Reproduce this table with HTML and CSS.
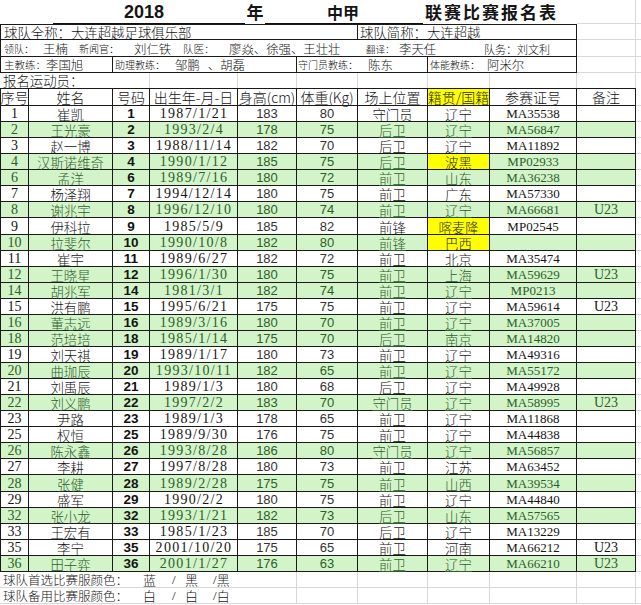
FILE: index.html
```html
<!DOCTYPE html>
<html lang="zh-CN">
<head>
<meta charset="utf-8">
<title>2018年中甲联赛比赛报名表</title>
<link rel="stylesheet" href="styles.css">
</head>
<body>
<div class="sheet">
  <div class="row r-title">
    <div class="title">
      <span class="u1">2018</span>
      <span class="nian">年</span>
      <span class="u2">中甲</span>
      <span class="ttl">联赛比赛报名表</span>
    </div>
    <div class="f"></div><div class="fx"></div>
  </div>

  <div class="row r-a">
    <div class="b bl a1"><span class="lbl13">球队全称：</span><span class="lbl13 ul">大连超越足球俱乐部</span></div>
    <div class="b a2"><span class="lbl13">球队简称：</span><span class="lbl13 ul">大连超越</span></div>
    <div class="f"></div><div class="fx"></div>
  </div>

  <div class="row r-b">
    <div class="b bl bspan">
      <span class="s w1 sm10">领队：</span>
      <span class="s w2 nm12">王楠</span>
      <span class="s w3 sm10">新闻官：</span>
      <span class="s w4 nm12">刘仁铁</span>
      <span class="s w5 sm105">队医：</span>
      <span class="s w6 nm12">廖焱、徐强、王壮壮</span>
      <span class="s w7 sm95">翻译：</span>
      <span class="s w8 nm12">李天任</span>
      <span class="s sm11">队务：刘文利</span>
    </div>
    <div class="f"></div><div class="fx"></div>
  </div>

  <div class="row r-c">
    <div class="b bl c1"><span class="sm105">主教练：</span><span class="nm12">李国旭</span></div>
    <div class="b c2"><span class="sm10">助理教练：</span><span class="nm12 m10">邹鹏</span><span class="nm12 m8">、胡磊</span></div>
    <div class="b c3"><span class="sm10">守门员教练：</span><span class="nm12 m10">陈东</span></div>
    <div class="b c4"><span class="sm10">体能教练：</span><span class="nm12 m7">阿米尔</span></div>
    <div class="f"></div><div class="fx"></div>
  </div>

  <div class="row r-d">
    <div class="d1">报名运动员：</div>
    <div class="fv"></div><div class="fv"></div><div class="fv"></div><div class="fv"></div><div class="fv"></div><div class="fv"></div><div class="fv"></div><div class="fv"></div>
    <div></div>
  </div>

  <div class="row head">
    <div class="c first">序号</div>
    <div class="c">姓名</div>
    <div class="c">号码</div>
    <div class="c">出生年-月-日</div>
    <div class="c">身高(cm)</div>
    <div class="c">体重(Kg)</div>
    <div class="c">场上位置</div>
    <div class="c yel">籍贯/国籍</div>
    <div class="c">参赛证号</div>
    <div class="c">备注</div>
    <div class="fx"></div>
  </div>

  <div class="row data">
    <div class="c first seq">1</div><div class="c nm">崔凯</div><div class="c no">1</div><div class="c dt">1987/1/21</div><div class="c ht">183</div><div class="c wt">80</div><div class="c ps"><span class="ul">守门员</span></div><div class="c nt"><span class="ul">辽宁</span></div><div class="c id">MA35538</div><div class="c rm"></div><div class="fx"></div>
  </div>
  <div class="row data green">
    <div class="c first seq">2</div><div class="c nm">王光豪</div><div class="c no">2</div><div class="c dt">1993/2/4</div><div class="c ht">178</div><div class="c wt">75</div><div class="c ps"><span class="ul">后卫</span></div><div class="c nt"><span class="ul">辽宁</span></div><div class="c id">MA56847</div><div class="c rm"></div><div class="fx"></div>
  </div>
  <div class="row data">
    <div class="c first seq">3</div><div class="c nm">赵一博</div><div class="c no">3</div><div class="c dt">1988/11/14</div><div class="c ht">182</div><div class="c wt">70</div><div class="c ps"><span class="ul">后卫</span></div><div class="c nt"><span class="ul">辽宁</span></div><div class="c id">MA11892</div><div class="c rm"></div><div class="fx"></div>
  </div>
  <div class="row data green">
    <div class="c first seq">4</div><div class="c nm">汉斯诺维奇</div><div class="c no">4</div><div class="c dt">1990/1/12</div><div class="c ht">185</div><div class="c wt">75</div><div class="c ps"><span class="ul">后卫</span></div><div class="c nt yel">波黑</div><div class="c id">MP02933</div><div class="c rm"></div><div class="fx"></div>
  </div>
  <div class="row data green">
    <div class="c first seq">6</div><div class="c nm">孟洋</div><div class="c no">6</div><div class="c dt">1989/7/16</div><div class="c ht">180</div><div class="c wt">72</div><div class="c ps"><span class="ul">前卫</span></div><div class="c nt">山东</div><div class="c id">MA36238</div><div class="c rm"></div><div class="fx"></div>
  </div>
  <div class="row data">
    <div class="c first seq">7</div><div class="c nm">杨泽翔</div><div class="c no">7</div><div class="c dt">1994/12/14</div><div class="c ht">180</div><div class="c wt">75</div><div class="c ps"><span class="ul">前卫</span></div><div class="c nt">广东</div><div class="c id">MA57330</div><div class="c rm"></div><div class="fx"></div>
  </div>
  <div class="row data green">
    <div class="c first seq">8</div><div class="c nm">谢兆宇</div><div class="c no">8</div><div class="c dt">1996/12/10</div><div class="c ht">180</div><div class="c wt">74</div><div class="c ps"><span class="ul">前卫</span></div><div class="c nt"><span class="ul">辽宁</span></div><div class="c id">MA66681</div><div class="c rm">U23</div><div class="fx"></div>
  </div>
  <div class="row data">
    <div class="c first seq">9</div><div class="c nm">伊科拉</div><div class="c no">9</div><div class="c dt">1985/5/9</div><div class="c ht">185</div><div class="c wt">82</div><div class="c ps"><span class="ul">前锋</span></div><div class="c nt yel">喀麦隆</div><div class="c id">MP02545</div><div class="c rm"></div><div class="fx"></div>
  </div>
  <div class="row data green">
    <div class="c first seq">10</div><div class="c nm">拉斐尔</div><div class="c no">10</div><div class="c dt">1990/10/8</div><div class="c ht">182</div><div class="c wt">80</div><div class="c ps"><span class="ul">前锋</span></div><div class="c nt yel">巴西</div><div class="c id"></div><div class="c rm"></div><div class="fx"></div>
  </div>
  <div class="row data">
    <div class="c first seq">11</div><div class="c nm">崔宇</div><div class="c no">11</div><div class="c dt">1989/6/27</div><div class="c ht">182</div><div class="c wt">72</div><div class="c ps"><span class="ul">前卫</span></div><div class="c nt">北京</div><div class="c id">MA35474</div><div class="c rm"></div><div class="fx"></div>
  </div>
  <div class="row data green">
    <div class="c first seq">12</div><div class="c nm">王晓星</div><div class="c no">12</div><div class="c dt">1996/1/30</div><div class="c ht">180</div><div class="c wt">75</div><div class="c ps"><span class="ul">前卫</span></div><div class="c nt">上海</div><div class="c id">MA59629</div><div class="c rm">U23</div><div class="fx"></div>
  </div>
  <div class="row data green">
    <div class="c first seq">14</div><div class="c nm">胡兆军</div><div class="c no">14</div><div class="c dt">1981/3/1</div><div class="c ht">182</div><div class="c wt">74</div><div class="c ps"><span class="ul">前卫</span></div><div class="c nt"><span class="ul">辽宁</span></div><div class="c id">MP0213</div><div class="c rm"></div><div class="fx"></div>
  </div>
  <div class="row data">
    <div class="c first seq">15</div><div class="c nm">洪有鹏</div><div class="c no">15</div><div class="c dt">1995/6/21</div><div class="c ht">175</div><div class="c wt">75</div><div class="c ps"><span class="ul">前卫</span></div><div class="c nt"><span class="ul">辽宁</span></div><div class="c id">MA59614</div><div class="c rm">U23</div><div class="fx"></div>
  </div>
  <div class="row data green">
    <div class="c first seq">16</div><div class="c nm">董志远</div><div class="c no">16</div><div class="c dt">1989/3/16</div><div class="c ht">180</div><div class="c wt">70</div><div class="c ps"><span class="ul">前卫</span></div><div class="c nt"><span class="ul">辽宁</span></div><div class="c id">MA37005</div><div class="c rm"></div><div class="fx"></div>
  </div>
  <div class="row data green">
    <div class="c first seq">18</div><div class="c nm">范培培</div><div class="c no">18</div><div class="c dt">1985/1/14</div><div class="c ht">175</div><div class="c wt">70</div><div class="c ps"><span class="ul">后卫</span></div><div class="c nt">南京</div><div class="c id">MA14820</div><div class="c rm"></div><div class="fx"></div>
  </div>
  <div class="row data">
    <div class="c first seq">19</div><div class="c nm">刘天祺</div><div class="c no">19</div><div class="c dt">1989/1/17</div><div class="c ht">180</div><div class="c wt">73</div><div class="c ps"><span class="ul">前卫</span></div><div class="c nt"><span class="ul">辽宁</span></div><div class="c id">MA49316</div><div class="c rm"></div><div class="fx"></div>
  </div>
  <div class="row data green">
    <div class="c first seq">20</div><div class="c nm">曲珈辰</div><div class="c no">20</div><div class="c dt">1993/10/11</div><div class="c ht">182</div><div class="c wt">65</div><div class="c ps"><span class="ul">前卫</span></div><div class="c nt"><span class="ul">辽宁</span></div><div class="c id">MA55172</div><div class="c rm"></div><div class="fx"></div>
  </div>
  <div class="row data">
    <div class="c first seq">21</div><div class="c nm">刘禹辰</div><div class="c no">21</div><div class="c dt">1989/1/3</div><div class="c ht">180</div><div class="c wt">68</div><div class="c ps"><span class="ul">后卫</span></div><div class="c nt"><span class="ul">辽宁</span></div><div class="c id">MA49928</div><div class="c rm"></div><div class="fx"></div>
  </div>
  <div class="row data green">
    <div class="c first seq">22</div><div class="c nm">刘义鹏</div><div class="c no">22</div><div class="c dt">1997/2/2</div><div class="c ht">183</div><div class="c wt">70</div><div class="c ps"><span class="ul">守门员</span></div><div class="c nt"><span class="ul">辽宁</span></div><div class="c id">MA58995</div><div class="c rm">U23</div><div class="fx"></div>
  </div>
  <div class="row data">
    <div class="c first seq">23</div><div class="c nm">尹路</div><div class="c no">23</div><div class="c dt">1989/1/3</div><div class="c ht">178</div><div class="c wt">65</div><div class="c ps"><span class="ul">前卫</span></div><div class="c nt"><span class="ul">辽宁</span></div><div class="c id">MA11868</div><div class="c rm"></div><div class="fx"></div>
  </div>
  <div class="row data">
    <div class="c first seq">25</div><div class="c nm">权恒</div><div class="c no">25</div><div class="c dt">1989/9/30</div><div class="c ht">176</div><div class="c wt">75</div><div class="c ps"><span class="ul">前卫</span></div><div class="c nt"><span class="ul">辽宁</span></div><div class="c id">MA44838</div><div class="c rm"></div><div class="fx"></div>
  </div>
  <div class="row data green">
    <div class="c first seq">26</div><div class="c nm">陈永鑫</div><div class="c no">26</div><div class="c dt">1993/8/28</div><div class="c ht">186</div><div class="c wt">80</div><div class="c ps"><span class="ul">守门员</span></div><div class="c nt"><span class="ul">辽宁</span></div><div class="c id">MA56857</div><div class="c rm"></div><div class="fx"></div>
  </div>
  <div class="row data">
    <div class="c first seq">27</div><div class="c nm">李耕</div><div class="c no">27</div><div class="c dt">1997/8/28</div><div class="c ht">180</div><div class="c wt">73</div><div class="c ps"><span class="ul">前卫</span></div><div class="c nt">江苏</div><div class="c id">MA63452</div><div class="c rm"></div><div class="fx"></div>
  </div>
  <div class="row data green">
    <div class="c first seq">28</div><div class="c nm">张健</div><div class="c no">28</div><div class="c dt">1989/2/28</div><div class="c ht">175</div><div class="c wt">75</div><div class="c ps"><span class="ul">前卫</span></div><div class="c nt">山西</div><div class="c id">MA39534</div><div class="c rm"></div><div class="fx"></div>
  </div>
  <div class="row data">
    <div class="c first seq">29</div><div class="c nm">盛军</div><div class="c no">29</div><div class="c dt">1990/2/2</div><div class="c ht">180</div><div class="c wt">75</div><div class="c ps"><span class="ul">前卫</span></div><div class="c nt"><span class="ul">辽宁</span></div><div class="c id">MA44840</div><div class="c rm"></div><div class="fx"></div>
  </div>
  <div class="row data green">
    <div class="c first seq">32</div><div class="c nm">张小龙</div><div class="c no">32</div><div class="c dt">1993/1/21</div><div class="c ht">182</div><div class="c wt">73</div><div class="c ps"><span class="ul">后卫</span></div><div class="c nt">山东</div><div class="c id">MA57565</div><div class="c rm"></div><div class="fx"></div>
  </div>
  <div class="row data">
    <div class="c first seq">33</div><div class="c nm">王宏有</div><div class="c no">33</div><div class="c dt">1985/1/23</div><div class="c ht">185</div><div class="c wt">70</div><div class="c ps"><span class="ul">后卫</span></div><div class="c nt"><span class="ul">辽宁</span></div><div class="c id">MA13229</div><div class="c rm"></div><div class="fx"></div>
  </div>
  <div class="row data">
    <div class="c first seq">35</div><div class="c nm">李宁</div><div class="c no">35</div><div class="c dt">2001/10/20</div><div class="c ht">175</div><div class="c wt">65</div><div class="c ps"><span class="ul">前卫</span></div><div class="c nt">河南</div><div class="c id">MA66212</div><div class="c rm">U23</div><div class="fx"></div>
  </div>
  <div class="row data green">
    <div class="c first seq">36</div><div class="c nm">田子弈</div><div class="c no">36</div><div class="c dt">2001/1/27</div><div class="c ht">176</div><div class="c wt">63</div><div class="c ps"><span class="ul">前卫</span></div><div class="c nt"><span class="ul">辽宁</span></div><div class="c id">MA66210</div><div class="c rm">U23</div><div class="fx"></div>
  </div>

  <div class="row foot">
    <div class="ft"><span class="fl">球队首选比赛服颜色：</span><span class="fc1">蓝</span><span class="fs">/</span><span class="fc2">黑</span><span class="fs2">/</span><span>黑</span></div>
    <div class="fg"></div><div class="fg"></div><div class="fg"></div><div class="fg"></div><div class="fg"></div><div class="fg"></div><div class="fgx"></div>
  </div>
  <div class="row foot">
    <div class="ft"><span class="fl">球队备用比赛服颜色：</span><span class="fc1">白</span><span class="fs">/</span><span class="fc2">白</span><span class="fs2">/</span><span>白</span></div>
    <div class="fg"></div><div class="fg"></div><div class="fg"></div><div class="fg"></div><div class="fg"></div><div class="fg"></div><div class="fgx"></div>
  </div>
</div>
</body>
</html>
```

FILE: styles.css
```css
* { box-sizing: border-box; }
html, body { margin: 0; padding: 0; }
body {
  width: 641px;
  height: 605px;
  overflow: hidden;
  background: #ffffff;
  color: #151515;
  font-family: "Noto Sans CJK SC", "Liberation Sans", sans-serif;
  font-weight: 300;
}
.sheet { display: flex; flex-direction: column; width: 641px; }

.row {
  display: grid;
  grid-template-columns: 29px 84px 37px 88px 59px 61px 70px 62px 87px 59px 5px;
}

/* faint spreadsheet gridlines */
.f { border-right: 1px solid #d8d8d8; border-bottom: 1px solid #d8d8d8; }
.fx { border-bottom: 1px solid #d8d8d8; }
.fv { border-right: 1px solid #d8d8d8; }

/* title */
.r-title { height: 24px; }
.title {
  grid-column: 1 / 10;
  display: flex;
  align-items: flex-end;
  padding-left: 53px;
  font-weight: 700;
}
.u1 {
  width: 192px;
  border-bottom: 1px solid #111;
  text-align: center;
  padding-right: 10px;
  font-family: "Liberation Sans", sans-serif;
  font-size: 18px;
  line-height: 22px;
  height: 23px;
}
.nian { width: 20px; text-align: center; font-size: 17px; height: 23px; line-height: 22px; }
.u2 {
  width: 158px;
  border-bottom: 1px solid #111;
  padding-left: 62px;
  font-size: 16px;
  height: 23px;
  line-height: 22px;
}
.ttl { padding-left: 2px; font-size: 17px; letter-spacing: 2px; height: 23px; line-height: 22px; }

/* boxed info rows */
.b {
  border-top: 1px solid #1a1a1a;
  border-right: 1px solid #1a1a1a;
  border-bottom: 1px solid #1a1a1a;
  display: flex;
  align-items: flex-end;
  white-space: nowrap;
  padding-left: 3px;
}
.r-b .b, .r-c .b { border-top: none; }
.bl { border-left: 1px solid #1a1a1a; }
.r-a { height: 16px; }
.r-b { height: 17px; }
.r-c { height: 16px; }
.r-d { height: 15px; }
.a1 { grid-column: 1 / 7; }
.a2 { grid-column: 7 / 10; padding-left: 2px; }
.bspan { grid-column: 1 / 10; }
.c1 { grid-column: 1 / 3; }
.c2 { grid-column: 3 / 6; padding-left: 2px; }
.c3 { grid-column: 6 / 8; padding-left: 1px; }
.c4 { grid-column: 8 / 10; padding-left: 2px; }

.lbl13 { font-size: 13.4px; line-height: 14px; }
.ul { text-decoration: underline; text-decoration-thickness: 1px; text-underline-offset: 1px; }
.s { flex: none; }
.sm10 { font-size: 10px; line-height: 14px; }
.sm95 { font-size: 9.5px; line-height: 14px; }
.sm105 { font-size: 10.5px; line-height: 14px; }
.sm11 { font-size: 11px; line-height: 14px; }
.nm12 { font-size: 12.4px; line-height: 14px; }
.w1 { width: 39px; }
.w2 { width: 36px; }
.w3 { width: 55px; }
.w4 { width: 49px; }
.w5 { width: 46px; }
.w6 { width: 137px; }
.w7 { width: 33px; }
.w8 { width: 85px; }
.m10 { margin-left: 10px; }
.m8 { margin-left: 8px; }
.m7 { margin-left: 7px; }

.d1 {
  grid-column: 1 / 3;
  padding-left: 3px;
  font-size: 13.4px;
  line-height: 15px;
  white-space: nowrap;
}

/* table */
.head { height: 18px; }
.data { height: 16.07px; }
.c {
  border-right: 1px solid #1a1a1a;
  border-bottom: 1px solid #1a1a1a;
  display: flex;
  align-items: flex-end;
  justify-content: center;
  white-space: nowrap;
  font-size: 13.4px;
  line-height: 14px;
}
.head .c { border-top: 1px solid #1a1a1a; font-size: 14px; line-height: 15px; }
.c.first { border-left: 1px solid #1a1a1a; }
.green .c { background: #d3f3c9; color: #2c5e2c; }
.c.yel, .green .c.yel { background: #ffff00; color: #2a2a10; }

.seq { font-family: "Liberation Serif", serif; font-size: 14px; }
.no { font-family: "Liberation Sans", sans-serif; font-weight: 700; font-size: 13.5px; color: #111; }
.green .c.no { color: #151515; }
.dt { font-family: "Liberation Serif", serif; font-size: 14px; letter-spacing: 1.3px; padding-left: 1px; }
.ht { font-family: "Liberation Sans", sans-serif; font-size: 13px; color: #333; }
.wt { font-family: "Liberation Sans", sans-serif; font-size: 13px; color: #333; }
.id { font-family: "Liberation Serif", serif; font-size: 13px; }
.rm { font-family: "Liberation Serif", serif; font-size: 14px; }

/* footer */
.foot { height: 16px; }
.ft {
  grid-column: 1 / 5;
  display: flex;
  align-items: flex-end;
  padding-left: 3px;
  white-space: nowrap;
  font-size: 13px;
  line-height: 15px;
  border-bottom: 1px solid #d8d8d8;
}
.fl { width: 140px; font-size: 12.5px; }
.fc1 { width: 29px; }
.fs { width: 13px; font-family: "Liberation Serif", serif; }
.fc2 { width: 28px; }
.fs2 { font-family: "Liberation Serif", serif; }
.fg { border-right: 1px solid #d8d8d8; border-bottom: 1px solid #d8d8d8; }
.fgx { border-bottom: 1px solid #d8d8d8; }
```
